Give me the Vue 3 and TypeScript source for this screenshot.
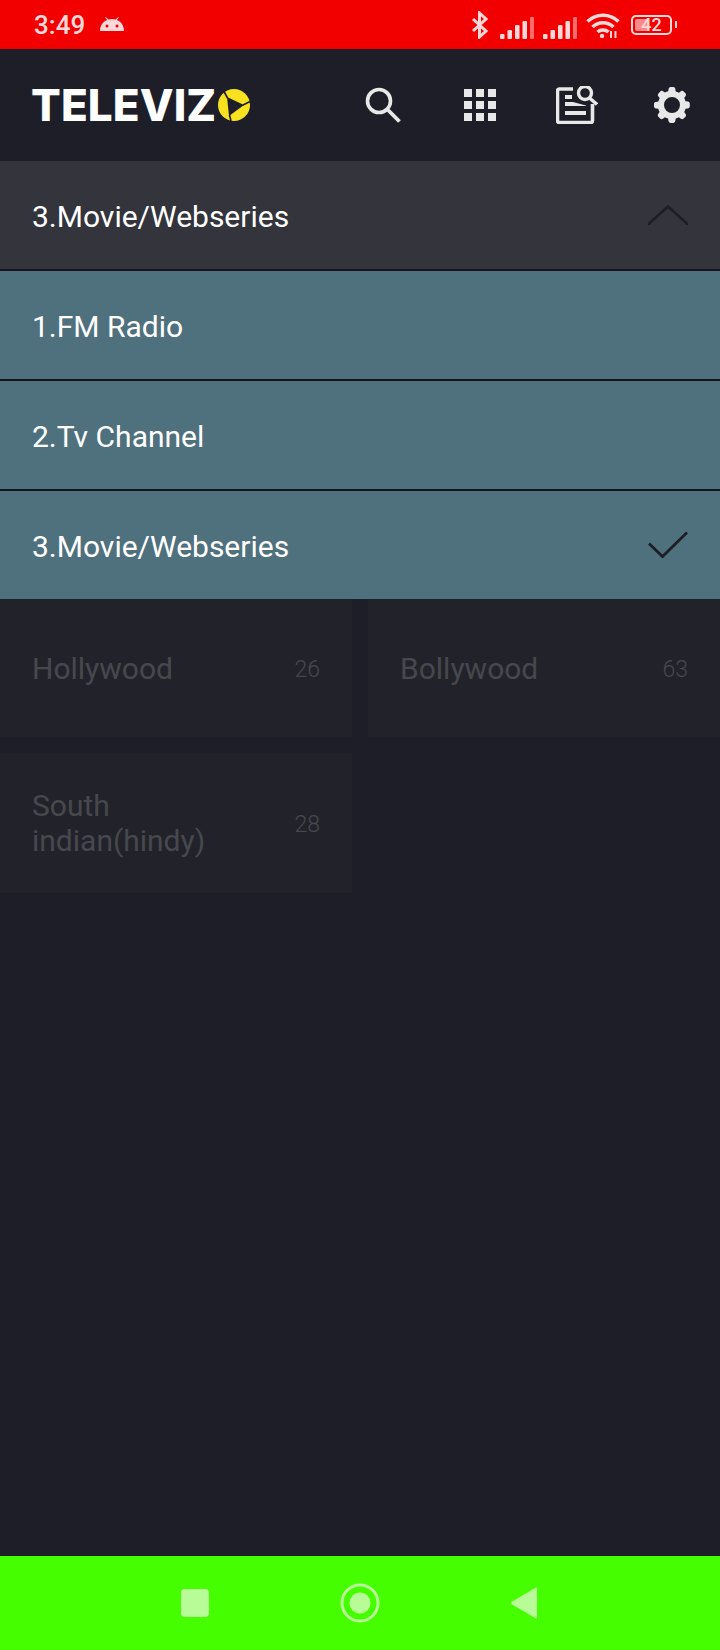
<template>
  <div class="screen">
    <div class="status-bar">
      <div class="status-left">
        <span class="time">3:49</span>
        <svg class="android" viewBox="0 0 24 14" width="24" height="14">
          <path d="M0 14C0 8.500 3 4.500 7.200 3L5 .6l.8-.6 2.600 2.600c2.300-.7 4.900-.7 7.200 0L18.200 0l.8.6L16.800 3C21 4.500 24 8.500 24 14Z" fill="currentColor" />
          <circle cx="7" cy="9" r="1.500" fill="#f20000" />
          <circle cx="17" cy="9" r="1.500" fill="#f20000" />
        </svg>
      </div>
      <div class="status-right">
        <svg class="bt" viewBox="0 0 18 28" width="18" height="28">
          <path d="M2 8l13 12-6.500 6V2L15 8 2 20" fill="none" stroke="currentColor" stroke-width="3" />
        </svg>
        <svg v-for="n in 2" :key="n" class="signal" viewBox="0 0 34 22" width="34" height="22">
          <rect x="0" y="17" width="4.500" height="5" rx="1" fill="currentColor" />
          <rect x="7.500" y="13" width="4.500" height="9" rx="1" fill="currentColor" />
          <rect x="15" y="8" width="4.500" height="14" rx="1" fill="currentColor" />
          <rect x="22.500" y="4" width="4.500" height="18" rx="1" fill="currentColor" />
          <rect x="30" y="0" width="4" height="22" rx="1" fill="currentColor" opacity=".5" />
        </svg>
        <svg class="wifi" viewBox="0 0 34 26" width="34" height="26">
          <path d="M1.500 9.500c8.800-8.400 22.200-8.400 31 0M6.500 15c6-5.600 15-5.600 21 0M11.500 20c3-2.600 8-2.600 11 0" fill="none" stroke="currentColor" stroke-width="3.600" />
          <circle cx="16" cy="24" r="2.200" fill="currentColor" />
          <path d="M25 19v7M29.500 19v7" stroke="currentColor" stroke-width="2" />
        </svg>
        <div class="battery">
          <div class="battery-body">
            <div class="battery-fill" :style="{ width: level + '%' }" />
            <span class="battery-text">{{ level }}</span>
          </div>
          <div class="battery-nub" />
        </div>
      </div>
    </div>

    <header class="topbar">
      <div class="logo">
        <span class="logo-text">TELEVIZ</span>
        <svg class="logo-mark" viewBox="0 0 32 32" width="32" height="32">
          <circle cx="16" cy="16" r="16" fill="#f8e11f" />
          <path d="M9 8L26 16 11 27Z" fill="#1d1e27" />
          <path d="M9.500 9L6 2.500M25 16l7-3.500M11.500 26L13 32" stroke="#1d1e27" stroke-width="1.600" />
        </svg>
      </div>
      <div class="actions">
        <svg viewBox="0 0 36 36" width="36" height="36" class="icon search">
          <circle cx="14" cy="14" r="11.500" fill="none" stroke="currentColor" stroke-width="3.600" />
          <path d="M22.500 22.500L34.500 34.500" stroke="currentColor" stroke-width="3.800" />
        </svg>
        <div class="apps">
          <span v-for="n in 9" :key="n" />
        </div>
        <svg viewBox="0 0 42 38" width="42" height="38" class="icon doc">
          <path d="M17 3H3.500A2 2 0 0 0 1.500 5V34.500A2 2 0 0 0 3.500 36.500H34.500A2 2 0 0 0 36.500 34.500V18" fill="none" stroke="currentColor" stroke-width="3.600" />
          <path d="M9 9h7v4H9ZM9 16h8l13 3.500V20H9ZM9 25h21v4H9Z" fill="currentColor" />
          <circle cx="29" cy="7" r="6.500" fill="none" stroke="currentColor" stroke-width="3.400" />
          <path d="M33.500 12l7.500 6.500" stroke="currentColor" stroke-width="3.400" />
        </svg>
        <svg viewBox="0 0 36 36" width="36" height="36" class="icon">
          <path d="M19.200 0h-2.400c-1.200 0-2 .8-2.200 1.900l-.4 2.400a14 14 0 0 0-3.200 1.300l-2-1.400c-.9-.6-2-.6-2.800.2L4.500 6.500c-.8.800-.9 1.900-.2 2.800l1.400 2a14 14 0 0 0-1.300 3.200l-2.400.4C.8 14.800 0 15.600 0 16.800v2.400c0 1.200.8 2 1.900 2.200l2.400.4a14 14 0 0 0 1.300 3.200l-1.400 2c-.6.900-.6 2 .2 2.800l1.700 1.700c.8.800 1.900.9 2.800.2l2-1.400a14 14 0 0 0 3.200 1.300l.4 2.400c.2 1.100 1 1.900 2.200 1.900h2.400c1.200 0 2-.8 2.200-1.900l.4-2.400a14 14 0 0 0 3.200-1.300l2 1.400c.9.600 2 .6 2.800-.2l1.700-1.700c.8-.8.900-1.900.2-2.800l-1.400-2a14 14 0 0 0 1.300-3.200l2.400-.4c1.100-.2 1.900-1 1.900-2.200v-2.400c0-1.200-.8-2-1.900-2.200l-2.400-.4a14 14 0 0 0-1.300-3.200l1.400-2c.6-.9.600-2-.2-2.800l-1.700-1.700c-.8-.8-1.900-.9-2.800-.2l-2 1.400a14 14 0 0 0-3.200-1.300l-.4-2.400C21.200.8 20.400 0 19.200 0ZM18 10a8 8 0 1 1 0 16 8 8 0 0 1 0-16Z" fill="currentColor" fill-rule="evenodd" />
        </svg>
      </div>
    </header>

    <div class="select-head">
      <span class="label">3.Movie/Webseries</span>
      <svg viewBox="0 0 40 20" width="40" height="20" class="mark">
        <path d="M0 19.500L20 1.500l20 18" fill="none" stroke="currentColor" stroke-width="2.600" />
      </svg>
    </div>
    <div class="options">
      <div v-for="opt in options" :key="opt" class="option">
        <span class="label">{{ opt }}</span>
        <svg v-if="opt === selected" viewBox="0 0 40 28" width="40" height="28" class="mark">
          <path d="M1 12.500L14.500 25.500 39 1.500" fill="none" stroke="currentColor" stroke-width="2.800" />
        </svg>
      </div>
    </div>

    <div class="grid">
      <div v-for="cat in categories" :key="cat.name" class="cell">
        <span class="cell-name">{{ cat.name }}</span>
        <span class="cell-count">{{ cat.count }}</span>
      </div>
    </div>

    <div class="spacer" />

    <nav class="navbar">
      <div class="nav-square" />
      <svg viewBox="0 0 40 40" width="40" height="40">
        <circle cx="20" cy="20" r="18" fill="none" stroke="#b8fc98" stroke-width="3" />
        <circle cx="20" cy="20" r="10.500" fill="#b8fc98" />
      </svg>
      <svg viewBox="0 0 28 32" width="28" height="32">
        <path d="M26 1.500V30.500L1.500 16Z" fill="#b8fc98" stroke="#b8fc98" stroke-width="2" stroke-linejoin="round" />
      </svg>
    </nav>
  </div>
</template>

<script setup lang="ts">
interface Category {
  name: string;
  count: number;
}

const level = 42;
const selected = '3.Movie/Webseries';
const options: string[] = ['1.FM Radio', '2.Tv Channel', '3.Movie/Webseries'];
const categories: Category[] = [
  { name: 'Hollywood', count: 26 },
  { name: 'Bollywood', count: 63 },
  { name: 'South indian(hindy)', count: 28 },
];
</script>

<style>
html,
body {
  margin: 0;
  background: #1d1e27;
}
</style>

<style scoped>
.screen {
  display: flex;
  flex-direction: column;
  width: 720px;
  height: 1650px;
  overflow: hidden;
  background: #1d1e27;
  font-family: Roboto, sans-serif;
}

.status-bar {
  display: flex;
  flex: none;
  align-items: center;
  justify-content: space-between;
  box-sizing: border-box;
  height: 49px;
  padding: 0 43px 0 34px;
  background: #f20000;
  color: #ffd9d9;
}

.status-left {
  display: flex;
  align-items: center;
  gap: 15px;
}

.time {
  font-size: 26px;
  font-weight: 500;
  line-height: 28px;
}

.android {
  margin-top: -1px;
}

.status-right {
  display: flex;
  align-items: center;
}

.bt {
  margin-right: 11px;
}

.signal {
  margin-right: 9px;
  margin-top: 6px;
}

.wifi {
  margin-right: 11px;
}

.battery {
  display: flex;
  align-items: center;
  gap: 3px;
}

.battery-body {
  position: relative;
  box-sizing: border-box;
  width: 41px;
  height: 20px;
  padding: 2px;
  border: 2px solid #ffd9d9;
  border-radius: 5px;
}

.battery-fill {
  height: 100%;
  background: #ff8a8a;
  border-radius: 2px 0 0 2px;
}

.battery-text {
  position: absolute;
  top: -2px;
  left: 0;
  width: 100%;
  font-size: 18px;
  font-weight: 500;
  line-height: 20px;
  text-align: center;
}

.battery-nub {
  width: 2px;
  height: 7px;
  background: #ffd9d9;
}

.topbar {
  display: flex;
  flex: none;
  align-items: center;
  justify-content: space-between;
  box-sizing: border-box;
  height: 112px;
  padding: 0 30px 0 31px;
}

.logo {
  display: flex;
  align-items: center;
  gap: 2px;
}

.logo-text {
  color: #fff;
  font-family: Inter, sans-serif;
  font-size: 44px;
  font-weight: 800;
  line-height: 32px;
  letter-spacing: .1px;
}

.actions {
  display: flex;
  align-items: center;
  gap: 60px;
  color: #e8e8e8;
}

.icon {
  display: block;
}

.search {
  margin-right: 3px;
}

.doc {
  margin-right: -4px;
}

.apps {
  display: grid;
  grid-template-columns: repeat(3, 8px);
  grid-auto-rows: 8px;
  gap: 4px;
}

.apps span {
  background: #e8e8e8;
}

.select-head,
.option {
  display: flex;
  align-items: center;
  justify-content: space-between;
  box-sizing: border-box;
  height: 108px;
  padding: 0 32px;
  color: #fff;
  font-size: 30px;
}

.label {
  padding-top: 2px;
}

.select-head {
  flex: none;
  background: #33343c;
}

.mark {
  display: block;
  color: #1d1e27;
}

.options {
  display: flex;
  flex: none;
  flex-direction: column;
  gap: 2px;
  padding-top: 2px;
  background: #14151c;
}

.option {
  background: #4f717d;
}

.grid {
  display: grid;
  flex: none;
  grid-template-columns: 352px 352px;
  gap: 16px;
}

.cell {
  display: flex;
  align-items: center;
  justify-content: space-between;
  box-sizing: border-box;
  min-height: 138px;
  padding: 35px 32px;
  background: #22232a;
}

.cell-name {
  max-width: 190px;
  color: #47484e;
  font-size: 30px;
  line-height: 35px;
}

.cell-count {
  padding-top: 2px;
  color: #47484e;
  font-size: 23px;
  font-weight: 300;
}

.spacer {
  flex: 1;
}

.navbar {
  display: flex;
  flex: none;
  align-items: center;
  justify-content: space-between;
  box-sizing: border-box;
  height: 94px;
  padding: 0 182px 0 181px;
  background: #45ff00;
}

.nav-square {
  width: 28px;
  height: 28px;
  background: #b8fc98;
  border-radius: 4px;
}
</style>
